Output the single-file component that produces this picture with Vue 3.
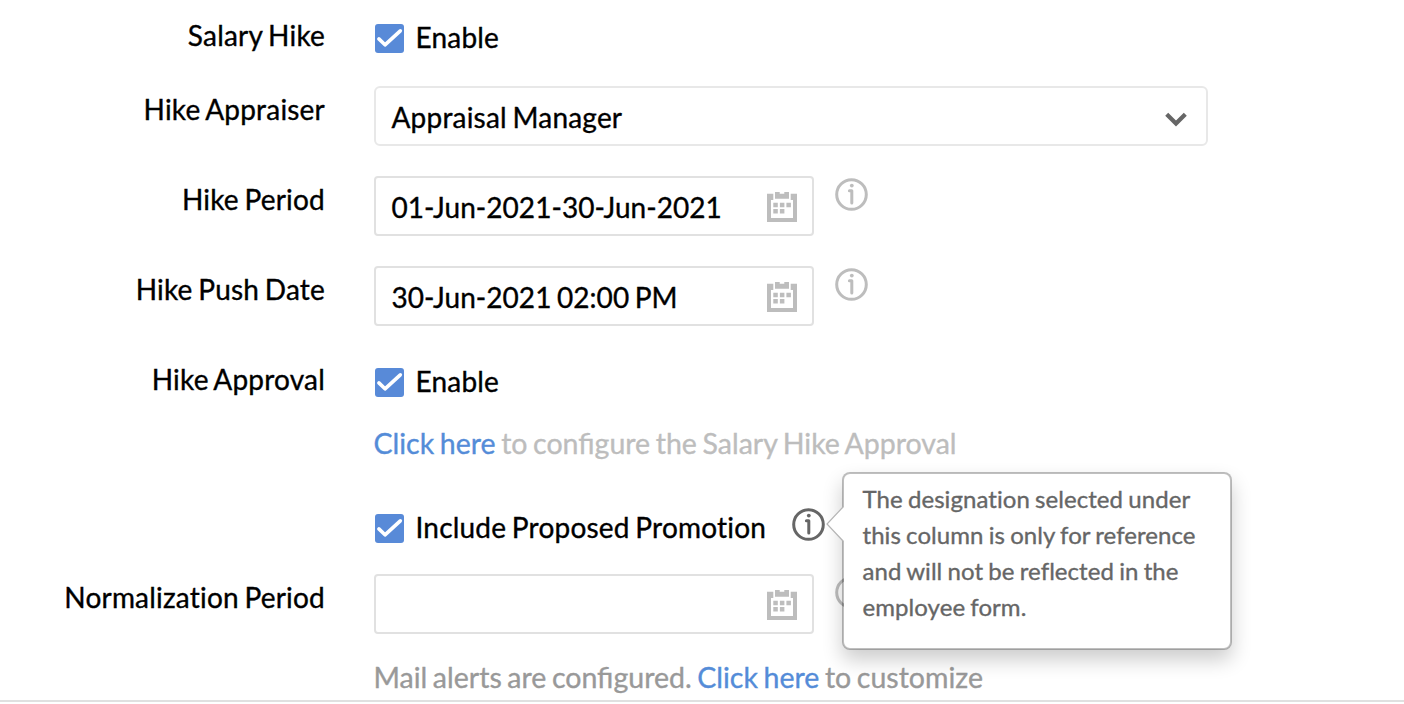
<script setup>
import { ref, h } from "vue";

const salaryHike = ref(true);
const hikeApproval = ref(true);
const includePromotion = ref(true);

const checkIcon = () => {
  return h("svg", { class: "check-icon", viewBox: "0 0 29 29" }, [
    h("path", { d: "M3.9 14.9 L10 20.8 L25.3 6.8" }),
  ]);
};
const calendarIcon = () => {
  return h("svg", { class: "calendar-icon", viewBox: "0 0 30 30" }, [
    h("path", {
      "fill-rule": "evenodd",
      d: "M0 1.8H6.3V8H23.7V1.8H30V30H0ZM4 8V26H26V8Z",
    }),
    h("path", { d: "M8 0H12.7V1.8H17.3V0H22V6.7H8Z" }),
    h("path", {
      d: "M6.3 10.7h4.5v4.5H6.3zM12.9 10.7h4.5v4.5h-4.5zM19.4 10.7h4.5v4.5h-4.5zM6.3 17.1h4.5v4.5H6.3zM12.9 17.1h4.5v4.5h-4.5z",
    }),
  ]);
};
const infoIcon = () => {
  return h("svg", { class: "info-icon", viewBox: "0 0 34 34" }, [
    h("circle", { cx: 16.5, cy: 16.5, r: 14.8 }),
    h("circle", { cx: 16.8, cy: 7.6, r: 1.9, fill: "currentColor", stroke: "none" }),
    h("path", { d: "M14.4 12.8 H16.8 V24.9" }),
  ]);
};
</script>

<template>
  <div class="form">
    <div class="row">
      <label class="name">Salary Hike</label>
      <div class="check" @click="salaryHike = !salaryHike">
        <span class="box"><check-icon v-if="salaryHike" /></span>
        <span>Enable</span>
      </div>
    </div>

    <div class="row">
      <label class="name">Hike Appraiser</label>
      <div class="field select">
        <span>Appraisal Manager</span>
        <svg class="chevron" viewBox="0 0 22 16">
          <path d="M1.7 2.2 L11 11.6 L20.3 2.2" />
        </svg>
      </div>
    </div>

    <div class="row">
      <label class="name">Hike Period</label>
      <div class="field date"><span>01-Jun-2021-30-Jun-2021</span><calendar-icon /></div>
      <div class="info"><info-icon /></div>
    </div>

    <div class="row">
      <label class="name">Hike Push Date</label>
      <div class="field date"><span>30-Jun-2021 02:00 PM</span><calendar-icon /></div>
      <div class="info"><info-icon /></div>
    </div>

    <div class="row approval">
      <label class="name">Hike Approval</label>
      <div class="check" @click="hikeApproval = !hikeApproval">
        <span class="box"><check-icon v-if="hikeApproval" /></span>
        <span>Enable</span>
      </div>
    </div>
    <p class="note light"><a>Click here</a> to configure the Salary Hike Approval</p>

    <div class="row promotion">
      <span class="name"></span>
      <div class="check" @click="includePromotion = !includePromotion">
        <span class="box"><check-icon v-if="includePromotion" /></span>
        <span class="promo">Include Proposed Promotion</span>
      </div>
      <div class="info active">
        <info-icon />
        <div class="tooltip">
          <svg class="arrow" viewBox="0 0 18 36">
            <path class="fill" d="M18 0.5 L1 18 L18 35.5 Z" />
            <path class="edge" d="M17.5 0.5 L1 18 L17.5 35.5" />
          </svg>
          The designation selected under this column is only for reference and will not be
          reflected in the employee form.
        </div>
      </div>
    </div>

    <div class="row normalization">
      <label class="name">Normalization Period</label>
      <div class="field date"><span></span><calendar-icon /></div>
      <div class="info"><info-icon /></div>
    </div>
    <p class="note mail">Mail alerts are configured. <a>Click here</a> to customize</p>
  </div>
</template>

<style>
body {
  background: #fff;
  overflow: hidden;
}
</style>

<style scoped>
.form {
  box-sizing: border-box;
  width: 1404px;
  height: 702px;
  padding-top: 12px;
  border-bottom: 2px solid #e0e0e0;
  color: #000;
  font-family: Lato, sans-serif;
  font-size: 28px;
  line-height: 36px;
  letter-spacing: 0.2px;
  word-spacing: -1.7px;
  -webkit-text-stroke: 0.35px currentColor;
}
.row {
  display: flex;
  align-items: flex-start;
  height: 60px;
  margin-bottom: 30px;
}
.row:first-child {
  margin-bottom: 14px;
}
.name {
  box-sizing: border-box;
  width: 325px;
  margin-right: 49px;
  padding-top: 5px;
  text-align: right;
  white-space: nowrap;
}
.check {
  display: flex;
  align-items: center;
  gap: 11.5px;
  padding: 7px 0 0 1px;
  white-space: nowrap;
}
.box {
  width: 29px;
  height: 29px;
  margin-top: 2px;
  border-radius: 3px;
  background: #588ad8;
}
.check-icon {
  display: block;
  fill: none;
  stroke: #fff;
  stroke-width: 3.6;
  stroke-linecap: round;
  stroke-linejoin: round;
}
.field {
  box-sizing: border-box;
  display: flex;
  align-items: center;
  justify-content: space-between;
  width: 440px;
  height: 60px;
  padding: 2px 15px 0 15.5px;
  border: 2px solid #e1e1e1;
  border-radius: 4px;
}
.date {
  letter-spacing: 0.05px;
}
.select {
  width: 834px;
  padding-right: 19px;
  border-color: #e8e8e8;
  border-radius: 6px;
}
.chevron {
  width: 22px;
  height: 16px;
  margin-top: 5px;
  fill: none;
  stroke: #666;
  stroke-width: 4.2;
}
.calendar-icon {
  width: 30px;
  height: 30px;
  fill: #bdbdbd;
}
.info {
  position: relative;
  width: 34px;
  height: 34px;
  margin: 2px 0 0 21px;
  color: #bdbdbd;
}
.info-icon {
  display: block;
  fill: none;
  stroke: currentColor;
  stroke-width: 3;
  stroke-linecap: round;
  stroke-linejoin: round;
}
.info.active {
  z-index: 1;
  margin: 6px 0 0 26px;
  color: #666;
}
.note {
  margin: 0 0 0 373.5px;
  color: #999;
  font-size: 28.5px;
  letter-spacing: normal;
}
.note a {
  color: #548cd8;
}
.light {
  color: #bdbdbd;
}
.approval {
  height: 56px;
  margin-bottom: 13px;
}
.promotion {
  height: 60px;
  margin: 41px 0 12px;
}
.promo {
  width: 350px;
}
.normalization {
  margin-bottom: 25px;
}
.tooltip {
  position: absolute;
  top: -36px;
  left: 50px;
  box-sizing: border-box;
  width: 390px;
  height: 178px;
  padding: 7px 19px;
  border: 2px solid rgba(0, 0, 0, 0.25);
  border-radius: 8px;
  background: #fff;
  background-clip: padding-box;
  box-shadow: 0 10px 20px rgba(0, 0, 0, 0.2);
  color: #666;
  font-size: 24px;
  letter-spacing: 0.06px;
  word-spacing: -1px;
}
.arrow {
  position: absolute;
  top: 32px;
  left: -18px;
  width: 18px;
  height: 36px;
}
.arrow .fill {
  fill: #fff;
}
.arrow .edge {
  fill: none;
  stroke: #b5b5b5;
  stroke-width: 1.2;
}
</style>
